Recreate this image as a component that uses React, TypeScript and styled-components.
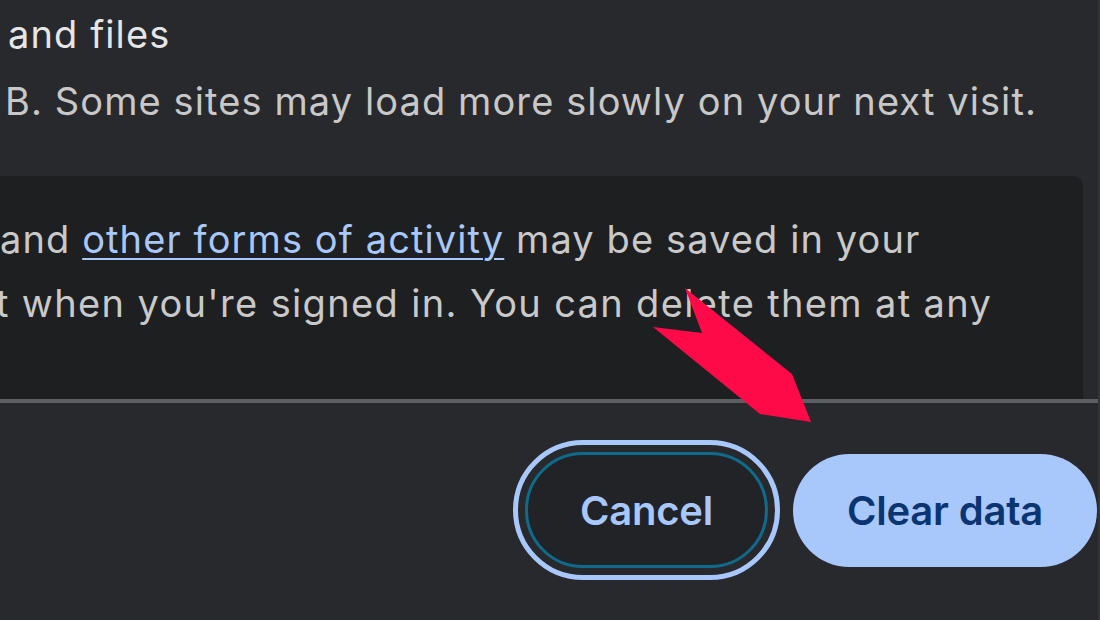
import React from "react";
import styled, { createGlobalStyle } from "styled-components";

const Global = createGlobalStyle`
  html, body { margin: 0; padding: 0; background: #28292d; }
  body { font-family: Inter, "Noto Sans", sans-serif; -webkit-font-smoothing: antialiased; }
`;

const Page = styled.div`
  position: relative;
  width: 1100px;
  height: 620px;
  overflow: hidden;
  background: #28292d;
  display: flex;
  flex-direction: column;
  box-sizing: border-box;
  border-right: 2px solid #333438;
`;

const Section = styled.div`
  padding: 1px 0 0 8px;
  display: flex;
  flex-direction: column;
`;

const Line = styled.div<{ $tone?: "bright" | "dim"; $shift?: number }>`
  font-size: 38px;
  line-height: 67px;
  letter-spacing: 1.1px;
  white-space: nowrap;
  margin-left: ${(p) => p.$shift ?? 0}px;
  color: ${(p) => (p.$tone === "bright" ? "#e6e6e6" : "#c8c8c8")};
`;

const InfoBox = styled.div`
  margin: 41px 15px 0 -20px;
  height: 223px;
  box-sizing: border-box;
  padding: 31px 0 0 20px;
  background: #1e1f21;
  border-radius: 0 10px 0 0;
  display: flex;
  flex-direction: column;
`;

const BoxLine = styled.div<{ $shift?: number; $spacing?: number }>`
  font-size: 38px;
  line-height: 64px;
  letter-spacing: ${(p) => p.$spacing ?? 1.1}px;
  white-space: nowrap;
  color: #c9c9c9;
  margin-left: ${(p) => p.$shift ?? 0}px;
`;

const Link = styled.a`
  color: #a8c7fa;
  text-decoration: underline;
  text-decoration-thickness: 2px;
  text-underline-offset: 5px;
`;

const Divider = styled.div`
  height: 4px;
  background: #5d5e61;
`;

const Footer = styled.div`
  flex: 1;
  display: flex;
  justify-content: flex-end;
  align-items: flex-start;
  gap: 25px;
  padding: 49px 1px 0 0;
`;

const Button = styled.button<{ $primary?: boolean }>`
  height: ${(p) => (p.$primary ? 113 : 116)}px;
  margin-top: ${(p) => (p.$primary ? 2 : 0)}px;
  width: ${(p) => (p.$primary ? 304 : 243)}px;
  border-radius: 60px;
  box-sizing: border-box;
  font-family: Inter, "Noto Sans", sans-serif;
  font-size: 40px;
  font-weight: 600;
  letter-spacing: -0.2px;
  cursor: pointer;
  border: ${(p) => (p.$primary ? "none" : "3px solid #0f6a8b")};
  background: ${(p) => (p.$primary ? "#a8c7fa" : "#222327")};
  color: ${(p) => (p.$primary ? "#0b3570" : "#a8c7fa")};
  outline: ${(p) => (p.$primary ? "none" : "5px solid #a8c7fa")};
  outline-offset: 7px;
`;

const Arrow = styled.svg`
  position: absolute;
  left: 0;
  top: 0;
  pointer-events: none;
`;

export default function App() {
  return (
    <Page>
      <Global />
      <Section>
        <Line $tone="bright">and files</Line>
        <Line $shift={-3}>B. Some sites may load more slowly on your next visit.</Line>
      </Section>
      <InfoBox>
        <BoxLine>
          and <Link href="#">other forms of activity</Link> may be saved in your
        </BoxLine>
        <BoxLine $shift={-4} $spacing={1.35}>
          t when you're signed in. You can delete them at any
        </BoxLine>
      </InfoBox>
      <Divider />
      <Footer>
        <Button>Cancel</Button>
        <Button $primary>Clear data</Button>
      </Footer>
      <Arrow width="1100" height="620" viewBox="0 0 1100 620">
        <polygon
          points="685,288 792,374 811,422 760,414 653,327 702,333"
          fill="#fe0a48"
        />
      </Arrow>
    </Page>
  );
}
